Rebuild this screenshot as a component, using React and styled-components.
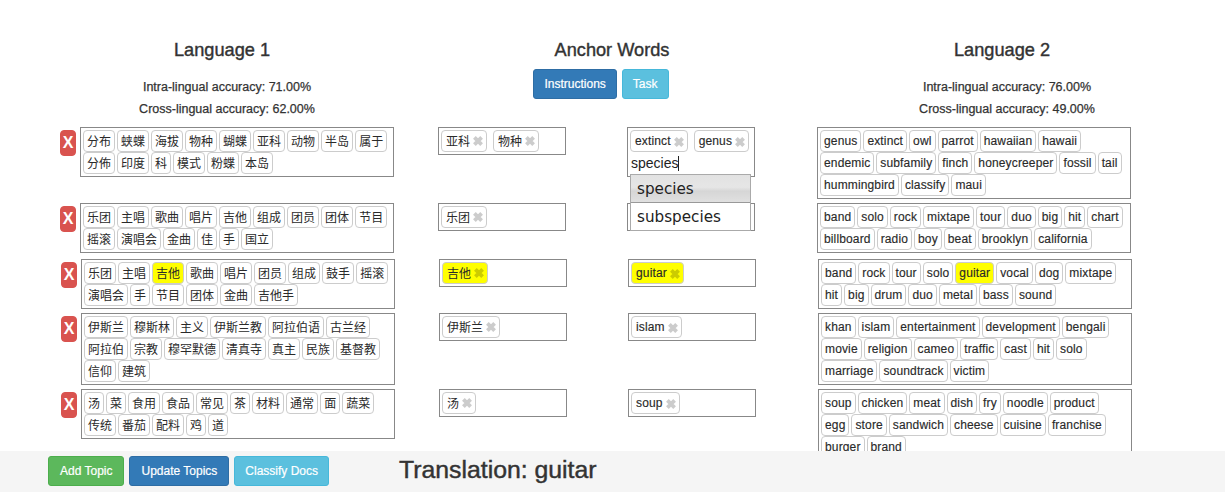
import React from "react";
import styled, { createGlobalStyle } from "styled-components";

const GlobalStyle = createGlobalStyle`
  html, body {
    margin: 0;
    padding: 0;
    background: #fff;
    overflow: hidden;
  }
  body {
    font-family: "Liberation Sans", "Noto Sans CJK SC", sans-serif;
    font-size: 12px;
    color: #333;
  }
`;

const Page = styled.div`
  height: 492px;
  overflow: hidden;
  padding-top: 40px;
  box-sizing: border-box;
`;

const Header = styled.div`
  display: grid;
  grid-template-columns: repeat(3, 390px);
  padding-left: 27px;
  height: 87px;
`;

const HeaderCol = styled.div`
  text-align: center;
`;

const Title = styled.h3`
  margin: 0 0 9px;
  font-size: 18.2px;
  line-height: 20px;
  font-weight: 400;
  -webkit-text-stroke: 0.4px #333;
`;

const Stat = styled.p`
  margin: 0 0 6px;
  font-size: 12.5px;
  line-height: 16px;
  -webkit-text-stroke: 0.25px #333;
`;

const StatGroup = styled.div`
  padding: 10px 0 0 10px;
`;

const ButtonGroup = styled.div`
  display: flex;
  justify-content: center;
  gap: 5px;
  padding-right: 22px;
`;

const Button = styled.button`
  height: 30px;
  padding: 0 ${(p) => p.$pad || 10}px;
  border: 1px solid ${(p) => p.$border};
  border-radius: 3px;
  background: ${(p) => p.$bg};
  color: #fff;
  font: 12px "Liberation Sans", sans-serif;
  -webkit-text-stroke: 0.2px #fff;
`;

const Row = styled.div`
  display: grid;
  grid-template-columns: 20px 358px 189px 190px 314px;
  padding-left: ${(p) => p.$left}px;
  height: ${(p) => p.$height}px;
`;

const RemoveButton = styled.button`
  width: 16px;
  height: 26px;
  margin-top: 3px;
  padding: 0;
  border: 1px solid #d9534f;
  border-radius: 4px;
  background: #d9534f;
  color: #fff;
  font: bold 16px "Liberation Sans", sans-serif;
`;

const TagBox = styled.div`
  box-sizing: border-box;
  width: 314px;
  height: ${(p) => p.$height}px;
  padding: 2px 3px 2px 1px;
  border: 1px solid #888;
  display: flex;
  flex-wrap: wrap;
  align-content: flex-start;
  position: relative;
`;

const Tag = styled.span`
  box-sizing: border-box;
  height: 22px;
  margin: 0 1px;
  padding: 0 3px ${(p) => (p.$latin ? 0 : 1)}px;
  display: inline-flex;
  align-items: center;
  border: 1px solid #ccc;
  border-radius: 4px;
  background: ${(p) => (p.$hit ? "#ff0" : "#fff")};
  color: #2a2a2a;
  font-size: 12px;
  white-space: nowrap;
  letter-spacing: ${(p) => (p.$latin ? "0.14px" : "0")};
  -webkit-text-stroke: ${(p) => (p.$latin ? "0.15px #2a2a2a" : "0")};
`;

const AnchorBox = styled(TagBox)`
  width: 128px;
  padding: 2px 1px;
  gap: 0 4px;
`;

const AnchorChip = styled(Tag)`
  padding-left: 4px;
  gap: 3px;
`;

const Remove = styled.svg`
  flex: none;
  width: 10px;
  height: 10px;
  margin-top: 1px;
  stroke: ${(p) => (p.$hit ? "#cccc00" : "#ccc")};
  stroke-width: 3.8;
`;

const TypedWord = styled.div`
  width: 100%;
  height: 22px;
  display: flex;
  align-items: center;
  padding-left: 2px;
  font-size: 14px;
  color: #222;
`;

const Caret = styled.span`
  width: 1px;
  height: 15px;
  background: #222;
`;

const Suggestions = styled.div`
  position: absolute;
  top: 46px;
  left: 2px;
  width: 121px;
  box-sizing: border-box;
  border: 1px solid #aaa;
  background: #fff;
  z-index: 2;
`;

const Suggestion = styled.div`
  height: 27px;
  padding-left: 6px;
  display: flex;
  align-items: center;
  font: 15.2px "DejaVu Sans", sans-serif;
  color: #222;
  background: ${(p) =>
    p.$active
      ? "linear-gradient(#e2e2e2, #e6e6e6 45%, #d6d6d6 60%, #e0e0e0)"
      : "#fff"};
  border-bottom: ${(p) => (p.$active ? "1px solid #999" : "0")};
`;

const Footer = styled.div`
  position: fixed;
  left: 0;
  right: 0;
  bottom: 0;
  height: 41px;
  box-sizing: border-box;
  padding: 0 0 1px 48px;
  display: flex;
  align-items: center;
  background: #f5f5f5;
  z-index: 3;
`;

const FooterButtons = styled.div`
  display: flex;
  gap: 5px;
  width: 351px;
`;

const Translation = styled.div`
  font-size: 24.8px;
  line-height: 28px;
  margin-bottom: 2px;
  -webkit-text-stroke: 0.45px #333;
`;

const rows = [
  {
    height: 76,
    left: 60,
    boxHeight: 50,
    rightHeight: 72,
    words: ["分布", "蛱蝶", "海拔", "物种", "蝴蝶", "亚科", "动物", "半岛", "属于", "分佈", "印度", "科", "模式", "粉蝶", "本岛"],
    a1: ["亚科", "物种"],
    a2: ["extinct", "genus"],
    typing: true,
    right: ["genus", "extinct", "owl", "parrot", "hawaiian", "hawaii", "endemic", "subfamily", "finch", "honeycreeper", "fossil", "tail", "hummingbird", "classify", "maui"],
  },
  {
    height: 56,
    left: 60,
    boxHeight: 50,
    rightHeight: 50,
    words: ["乐团", "主唱", "歌曲", "唱片", "吉他", "组成", "团员", "团体", "节目", "摇滚", "演唱会", "金曲", "佳", "手", "国立"],
    a1: ["乐团"],
    a2: [],
    right: ["band", "solo", "rock", "mixtape", "tour", "duo", "big", "hit", "chart", "billboard", "radio", "boy", "beat", "brooklyn", "california"],
  },
  {
    height: 54,
    left: 61,
    boxHeight: 50,
    rightHeight: 50,
    hit: ["吉他", "guitar"],
    words: ["乐团", "主唱", "吉他", "歌曲", "唱片", "团员", "组成", "鼓手", "摇滚", "演唱会", "手", "节目", "团体", "金曲", "吉他手"],
    a1: ["吉他"],
    a2: ["guitar"],
    right: ["band", "rock", "tour", "solo", "guitar", "vocal", "dog", "mixtape", "hit", "big", "drum", "duo", "metal", "bass", "sound"],
  },
  {
    height: 76,
    left: 61,
    boxHeight: 72,
    rightHeight: 72,
    words: ["伊斯兰", "穆斯林", "主义", "伊斯兰教", "阿拉伯语", "古兰经", "阿拉伯", "宗教", "穆罕默德", "清真寺", "真主", "民族", "基督教", "信仰", "建筑"],
    a1: ["伊斯兰"],
    a2: ["islam"],
    right: ["khan", "islam", "entertainment", "development", "bengali", "movie", "religion", "cameo", "traffic", "cast", "hit", "solo", "marriage", "soundtrack", "victim"],
  },
  {
    height: 76,
    left: 61,
    boxHeight: 50,
    rightHeight: 72,
    words: ["汤", "菜", "食用", "食品", "常见", "茶", "材料", "通常", "面", "蔬菜", "传统", "番茄", "配料", "鸡", "道"],
    a1: ["汤"],
    a2: ["soup"],
    right: ["soup", "chicken", "meat", "dish", "fry", "noodle", "product", "egg", "store", "sandwich", "cheese", "cuisine", "franchise", "burger", "brand"],
  },
];

const AnchorTag = ({ word, hit, latin }) => (
  <AnchorChip $hit={hit} $latin={latin}>
    {word}
    <Remove $hit={hit} viewBox="0 0 10 10">
      <path d="M1.4 1.4 L8.6 8.6 M8.6 1.4 L1.4 8.6" />
    </Remove>
  </AnchorChip>
);

const isHit = (row, word) => Boolean(row.hit && row.hit.includes(word));

const App = () => (
  <Page>
    <GlobalStyle />
    <Header>
      <HeaderCol>
        <Title>Language 1</Title>
        <StatGroup>
          <Stat>Intra-lingual accuracy: 71.00%</Stat>
          <Stat>Cross-lingual accuracy: 62.00%</Stat>
        </StatGroup>
      </HeaderCol>
      <HeaderCol>
        <Title>Anchor Words</Title>
        <ButtonGroup>
          <Button $bg="#337ab7" $border="#2e6da4">Instructions</Button>
          <Button $bg="#5bc0de" $border="#46b8da">Task</Button>
        </ButtonGroup>
      </HeaderCol>
      <HeaderCol>
        <Title>Language 2</Title>
        <StatGroup>
          <Stat>Intra-lingual accuracy: 76.00%</Stat>
          <Stat>Cross-lingual accuracy: 49.00%</Stat>
        </StatGroup>
      </HeaderCol>
    </Header>

    {rows.map((row, i) => (
      <Row key={i} $height={row.height} $left={row.left}>
        <RemoveButton>X</RemoveButton>
        <TagBox $height={row.boxHeight}>
          {row.words.map((w) => (
            <Tag key={w} $hit={isHit(row, w)}>{w}</Tag>
          ))}
        </TagBox>
        <AnchorBox $height={28}>
          {row.a1.map((w) => (
            <AnchorTag key={w} word={w} hit={isHit(row, w)} />
          ))}
        </AnchorBox>
        <AnchorBox $height={row.typing ? 50 : 28}>
          {row.a2.map((w) => (
            <AnchorTag key={w} word={w} hit={isHit(row, w)} latin />
          ))}
          {row.typing && (
            <>
              <TypedWord>species<Caret /></TypedWord>
              <Suggestions>
                <Suggestion $active>species</Suggestion>
                <Suggestion>subspecies</Suggestion>
              </Suggestions>
            </>
          )}
        </AnchorBox>
        <TagBox $height={row.rightHeight}>
          {row.right.map((w) => (
            <Tag key={w} $hit={isHit(row, w)} $latin>{w}</Tag>
          ))}
        </TagBox>
      </Row>
    ))}

    <Footer>
      <FooterButtons>
        <Button $bg="#5cb85c" $border="#4cae4c" $pad={11}>Add Topic</Button>
        <Button $bg="#337ab7" $border="#2e6da4" $pad={11}>Update Topics</Button>
        <Button $bg="#5bc0de" $border="#46b8da">Classify Docs</Button>
      </FooterButtons>
      <Translation>Translation: guitar</Translation>
    </Footer>
  </Page>
);

export default App;
